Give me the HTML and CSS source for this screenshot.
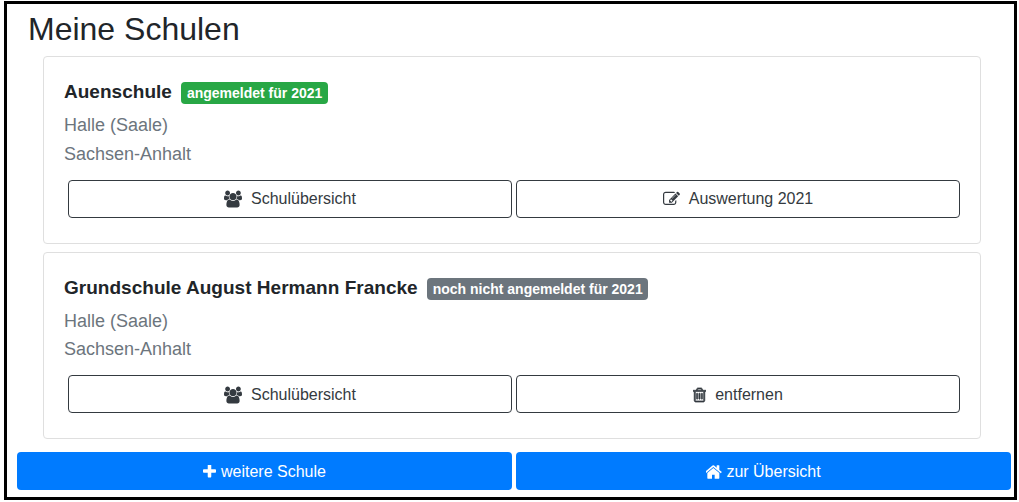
FILE: index.html
```html
<!DOCTYPE html>
<html lang="de">
<head>
	<meta charset="UTF-8">
	<title>Meine Schulen</title>
	<link rel="stylesheet" href="styles.css">
</head>
<body>
	<div class="frame">
		<h1 class="title">Meine Schulen</h1>
		<div class="cards">
			<div class="card">
				<div class="card-head">
					<h5 class="school">Auenschule</h5>
					<span class="badge green">angemeldet für 2021</span>
				</div>
				<p class="place">Halle (Saale)</p>
				<p class="place">Sachsen-Anhalt</p>
				<div class="btn-row">
					<a class="btn outline"><svg class="ico users" viewBox="0 0 1920 1792"><path d="M593 896q-162 5-265 128h-134q-82 0-138-40.5t-56-118.5q0-353 124-353 6 0 43.5 21t97.5 42.5 119 21.5q67 0 133-23-5 37-5 66 0 139 81 256zm1071 637q0 120-73 189.5t-194 69.5h-874q-121 0-194-69.5t-73-189.5q0-53 3.5-103.5t14-109 26.5-108.5 43-97.5 62-81 85.5-53.5 111.5-20q10 0 43 21.5t73 48 107 48 135 21.5 135-21.5 107-48 73-48 43-21.5q61 0 111.5 20t85.5 53.5 62 81 43 97.5 26.5 108.5 14 109 3.5 103.5zm-1024-1277q0 106-75 181t-181 75-181-75-75-181 75-181 181-75 181 75 75 181zm704 384q0 159-112.5 271.5t-271.5 112.5-271.5-112.5-112.5-271.5 112.5-271.5 271.5-112.5 271.5 112.5 112.5 271.5zm576 225q0 78-56 118.5t-138 40.5h-134q-103-123-265-128 81-117 81-256 0-29-5-66 66 23 133 23 59 0 119-21.5t97.5-42.5 43.5-21q124 0 124 353zm-128-609q0 106-75 181t-181 75-181-75-75-181 75-181 181-75 181 75 75 181z"/></svg>Schulübersicht</a>
					<a class="btn outline"><svg class="ico edit" viewBox="0 0 1792 1792"><path d="M888 1184l116-116-152-152-116 116v56h96v96h56zm440-720q-16-16-33 1l-350 350q-17 17-1 33t33-1l350-350q17-17 1-33zm80 594v190q0 119-84.5 203.5t-203.5 84.5h-832q-119 0-203.5-84.5t-84.5-203.5v-832q0-119 84.5-203.5t203.5-84.5h832q63 0 117 25 15 7 18 23 3 17-9 29l-49 49q-14 14-32 8-23-6-45-6h-832q-66 0-113 47t-47 113v832q0 66 47 113t113 47h832q66 0 113-47t47-113v-126q0-13 9-22l64-64q15-15 35-7t20 29zm-96-738l288 288-672 672h-288v-288zm444 132l-92 92-288-288 92-92q28-28 68-28t68 28l152 152q28 28 28 68t-28 68z"/></svg>Auswertung 2021</a>
				</div>
			</div>
			<div class="card">
				<div class="card-head">
					<h5 class="school">Grundschule August Hermann Francke</h5>
					<span class="badge grey">noch nicht angemeldet für 2021</span>
				</div>
				<p class="place">Halle (Saale)</p>
				<p class="place">Sachsen-Anhalt</p>
				<div class="btn-row">
					<a class="btn outline"><svg class="ico users" viewBox="0 0 1920 1792"><path d="M593 896q-162 5-265 128h-134q-82 0-138-40.5t-56-118.5q0-353 124-353 6 0 43.5 21t97.5 42.5 119 21.5q67 0 133-23-5 37-5 66 0 139 81 256zm1071 637q0 120-73 189.5t-194 69.5h-874q-121 0-194-69.5t-73-189.5q0-53 3.5-103.5t14-109 26.5-108.5 43-97.5 62-81 85.5-53.5 111.5-20q10 0 43 21.5t73 48 107 48 135 21.5 135-21.5 107-48 73-48 43-21.5q61 0 111.5 20t85.5 53.5 62 81 43 97.5 26.5 108.5 14 109 3.5 103.5zm-1024-1277q0 106-75 181t-181 75-181-75-75-181 75-181 181-75 181 75 75 181zm704 384q0 159-112.5 271.5t-271.5 112.5-271.5-112.5-112.5-271.5 112.5-271.5 271.5-112.5 271.5 112.5 112.5 271.5zm576 225q0 78-56 118.5t-138 40.5h-134q-103-123-265-128 81-117 81-256 0-29-5-66 66 23 133 23 59 0 119-21.5t97.5-42.5 43.5-21q124 0 124 353zm-128-609q0 106-75 181t-181 75-181-75-75-181 75-181 181-75 181 75 75 181z"/></svg>Schulübersicht</a>
					<a class="btn outline"><svg class="ico trash" viewBox="0 0 1408 1792"><path transform="translate(-192 0)" d="M704 736v576q0 14-9 23t-23 9h-64q-14 0-23-9t-9-23v-576q0-14 9-23t23-9h64q14 0 23 9t9 23zm256 0v576q0 14-9 23t-23 9h-64q-14 0-23-9t-9-23v-576q0-14 9-23t23-9h64q14 0 23 9t9 23zm256 0v576q0 14-9 23t-23 9h-64q-14 0-23-9t-9-23v-576q0-14 9-23t23-9h64q14 0 23 9t9 23zm128 724v-948h-896v948q0 22 7 40.5t14.5 27 10.5 8.5h832q3 0 10.5-8.5t14.5-27 7-40.5zm-672-1076h448l-48-117q-7-9-17-11h-317q-10 2-17 11zm928 32v64q0 14-9 23t-23 9h-96v948q0 83-47 143.5t-113 60.5h-832q-66 0-113-58.5t-47-141.5v-952h-96q-14 0-23-9t-9-23v-64q0-14 9-23t23-9h309l70-167q15-37 54-63t79-26h320q40 0 79 26t54 63l70 167h309q14 0 23 9t9 23z"/></svg>entfernen</a>
				</div>
			</div>
		</div>
		<div class="btn-row bottom">
			<a class="btn primary"><svg class="ico plus" viewBox="192 192 1408 1408"><path d="M1600 736v192q0 40-28 68t-68 28h-416v416q0 40-28 68t-68 28h-192q-40 0-68-28t-28-68v-416h-416q-40 0-68-28t-28-68v-192q0-40 28-68t68-28h416v-416q0-40 28-68t68-28h192q40 0 68 28t28 68v416h416q40 0 68 28t28 68z"/></svg>weitere Schule</a>
			<a class="btn primary"><svg class="ico home" viewBox="128 128 1536 1536"><path d="M1408 992v480q0 26-19 45t-45 19h-384v-384h-256v384h-384q-26 0-45-19t-19-45v-480q0-1 .5-3t.5-3l575-474 575 474q1 2 1 6zm223-69l-62 74q-8 9-21 11h-3q-13 0-21-7l-692-577-692 577q-12 8-24 7-13-2-21-11l-62-74q-8-10-7-23.5t11-21.5l719-599q32-26 76-26t76 26l244 204v-195q0-14 9-23t23-9h192q14 0 23 9t9 23v408l219 182q10 8 11 21.5t-7 23.5z"/></svg>zur Übersicht</a>
		</div>
	</div>
</body>
</html>
```

FILE: styles.css
```css
*{
	box-sizing: border-box;
	margin: 0;
	padding: 0;
}
body{
	font-family: "Liberation Sans", Arial, sans-serif;
	font-size: 16px;
	color: #212529;
	background: #fff;
}
.frame{
	width: 1013px;
	height: 499px;
	margin: 1px 0 0 4px;
	border: 3px solid #000;
}
.title{
	font-size: 32px;
	font-weight: 400;
	line-height: 38px;
	margin: 6px 0 8.4px 21px;
}
.cards{
	margin: 0 33px 0 36px;
}
.card{
	margin-bottom: 8px;
	padding: 20px 20px 25.2px;
	border: 1px solid #dfdfdf;
	border-radius: 4px;
}
.card:last-child{
	padding-bottom: 24.8px;
}
.card-head{
	display: flex;
	align-items: center;
	height: 30px;
	margin-bottom: 3.6px;
}
.school{
	font-size: 19px;
	font-weight: 700;
	line-height: 30px;
	letter-spacing: .02px;
}
.badge{
	margin: 2px 0 0 9.4px;
	padding: 0 5.6px;
	height: 22px;
	line-height: 22px;
	font-size: 14px;
	font-weight: 700;
	color: #fff;
	border-radius: 4px;
}
.green{
	background: #28a745;
}
.grey{
	background: #6c757d;
}
.place{
	font-size: 18px;
	line-height: 28.8px;
	color: #6c757d;
}
.btn-row{
	display: flex;
	gap: 4px;
	margin-top: 11.2px;
	padding-left: 4px;
}
.btn{
	flex: 1;
	display: flex;
	align-items: center;
	justify-content: center;
	height: 38px;
	padding-top: .4px;
	border-radius: 4px;
}
.outline{
	border: 1px solid #343a40;
	color: #343a40;
}
.primary{
	background: #007bff;
	color: #fff;
}
.ico{
	fill: currentColor;
	height: 18px;
}
.users{
	width: 18px;
	margin-right: 9px;
}
.edit{
	width: 17px;
	margin-right: 9px;
}
.trash{
	width: 13px;
	margin-right: 9px;
	stroke: currentColor;
	stroke-width: 70;
}
.plus{
	width: 13px;
	height: 13px;
	margin-right: 5px;
}
.home{
	width: 16px;
	height: 16px;
	margin-right: 4px;
}
.bottom{
	margin: 13.2px 3px 0 10px;
	padding-left: 0;
}
```
